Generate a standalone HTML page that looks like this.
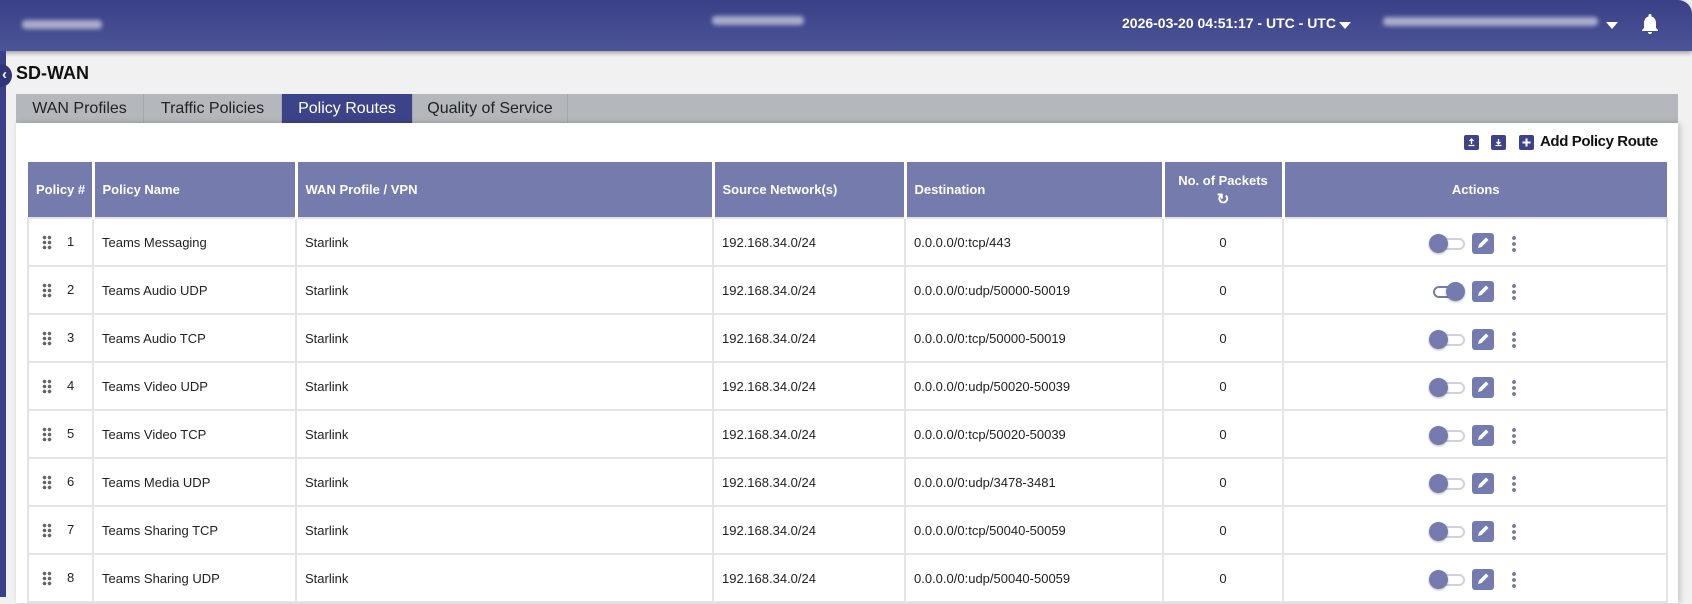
<!DOCTYPE html>
<html><head><meta charset="utf-8"><style>
*{box-sizing:border-box;margin:0;padding:0}
body{width:1692px;height:597px;overflow:hidden;background:#f1f1f1;font-family:"Liberation Sans",sans-serif;position:relative}
.hdr{position:absolute;left:0;top:0;width:1692px;height:51px;background:linear-gradient(#3a4087,#4c5497);box-shadow:0 2px 5px rgba(0,0,0,.35);color:#fff;border-top-right-radius:14px}
.blur{position:absolute;height:9px;background:rgba(255,255,255,.55);filter:blur(2px);border-radius:4px}
.lstripe{position:absolute;left:0;top:51px;width:6px;height:546px;background:#3a4087}
.circ{position:absolute;left:-11px;top:64px;width:23px;height:23px;border-radius:50%;background:#2f3578;color:#fff;font-size:15px;font-weight:bold;line-height:22px;text-align:right;padding-right:5px}
.title{position:absolute;left:16px;top:63px;font-size:18px;font-weight:bold;color:#111}
.tabs{position:absolute;left:16px;top:94px;width:1662px;height:29px;background:#b4b7bb}
.tab{position:absolute;top:0;height:29px;line-height:29px;text-align:center;font-size:16px;color:#222;border-right:1px solid #a5a8ad}
.card{position:absolute;left:16px;top:123px;width:1662px;height:480px;background:#fff;box-shadow:2px 0 6px rgba(0,0,0,.2)}
.sq{position:absolute;top:135px;width:15px;height:15px;background:#3d4388;border-radius:2px}
table{position:absolute;left:27px;top:162px;border-collapse:collapse;table-layout:fixed;width:1641px}
th{background:#757bac;color:#fff;font-size:13px;font-weight:bold;height:56px;text-align:left;padding-left:8px;border-left:3px solid #fff}
th:first-child{border-left:none}
td{height:48px;font-size:13px;color:#222;padding-left:8px;border:2px solid #e4e4e4}
td:first-child{padding-left:13px}
.c{text-align:center;padding-left:0}
.grip{display:inline-block;width:10px;height:15px;margin-right:15px;vertical-align:middle;background:radial-gradient(circle,#666 1.6px,transparent 2px) 0 0/5px 5px}
.act{position:relative;height:48px}
.tr{position:absolute;top:18px;width:30px;height:12px;border-radius:6px;border:2px solid #cfd1e3}
.kn{position:absolute;top:14px;width:19px;height:19px;border-radius:50%;background:#757bac;box-shadow:0 1px 2px rgba(0,0,0,.3)}
.ed{position:absolute;top:13px;width:22px;height:21px;background:#757bac;border-radius:3px}
.dots{position:absolute;top:15px;width:4px;height:18px;background:radial-gradient(circle,#757bac 1.8px,transparent 2.1px) 0 0/4px 6px}
</style></head><body>
<div class="hdr">
<div class="blur" style="left:22px;top:20px;width:80px"></div>
<div class="blur" style="left:712px;top:16px;width:92px"></div>
<div style="position:absolute;left:1122px;top:15px;font-size:14px;font-weight:bold">2026-03-20 04:51:17 - UTC - UTC</div>
<div style="position:absolute;left:1339px;top:22px;border:6px solid transparent;border-top:7px solid #fff"></div>
<div class="blur" style="left:1383px;top:17px;width:215px"></div>
<div style="position:absolute;left:1606px;top:22px;border:6px solid transparent;border-top:7px solid #fff"></div>
<svg style="position:absolute;left:1641px;top:13px" width="18" height="22" viewBox="0 0 18 22"><path d="M9 1a1.5 1.5 0 0 1 1.5 1.5v1C13.5 4.3 15 7 15 10v5l2 2v1H1v-1l2-2v-5c0-3 1.5-5.7 4.5-6.5v-1A1.5 1.5 0 0 1 9 1zM7 19h4a2 2 0 0 1-4 0z" fill="#fff"/></svg>
</div>
<div class="lstripe"></div>
<div class="circ">‹</div>
<div class="title">SD-WAN</div>
<div class="tabs">
<div class="tab" style="left:0;width:128px">WAN Profiles</div>
<div class="tab" style="left:128px;width:138px">Traffic Policies</div>
<div class="tab" style="left:266px;width:131px;background:#3d4388;color:#fff">Policy Routes</div>
<div class="tab" style="left:397px;width:155px">Quality of Service</div>
</div>
<div class="card"></div>
<div class="sq" style="left:1464px"><svg width="15" height="15" viewBox="0 0 15 15"><path d="M7.5 4v5M5.5 6l2-2 2 2M4.5 10.5h6" stroke="#fff" stroke-width="1.3" fill="none"/></svg></div>
<div class="sq" style="left:1491px"><svg width="15" height="15" viewBox="0 0 15 15"><path d="M7.5 4v5M5.5 7l2 2 2-2M4.5 10.5h6" stroke="#fff" stroke-width="1.3" fill="none"/></svg></div>
<div class="sq" style="left:1519px"><svg width="15" height="15" viewBox="0 0 15 15"><path d="M7.5 3.5v8M3.5 7.5h8" stroke="#fff" stroke-width="2" fill="none"/></svg></div>
<div style="position:absolute;left:1540px;top:133px;font-size:15px;font-weight:bold;color:#111;letter-spacing:-0.4px">Add Policy Route</div>
<table>
<colgroup><col style="width:65px"><col style="width:203px"><col style="width:417px"><col style="width:192px"><col style="width:258px"><col style="width:120px"><col></colgroup>
<tr><th>Policy #</th><th>Policy Name</th><th>WAN Profile / VPN</th><th>Source Network(s)</th><th>Destination</th><th class="c" style="line-height:19px">No. of Packets<br><span style="font-size:15px">↻</span></th><th class="c">Actions</th></tr>
<tr><td><span class="grip"></span>1</td><td>Teams Messaging</td><td>Starlink</td><td>192.168.34.0/24</td><td>0.0.0.0/0:tcp/443</td><td class="c">0</td><td class="act"></td></tr>
<tr><td><span class="grip"></span>2</td><td>Teams Audio UDP</td><td>Starlink</td><td>192.168.34.0/24</td><td>0.0.0.0/0:udp/50000-50019</td><td class="c">0</td><td class="act"></td></tr>
<tr><td><span class="grip"></span>3</td><td>Teams Audio TCP</td><td>Starlink</td><td>192.168.34.0/24</td><td>0.0.0.0/0:tcp/50000-50019</td><td class="c">0</td><td class="act"></td></tr>
<tr><td><span class="grip"></span>4</td><td>Teams Video UDP</td><td>Starlink</td><td>192.168.34.0/24</td><td>0.0.0.0/0:udp/50020-50039</td><td class="c">0</td><td class="act"></td></tr>
<tr><td><span class="grip"></span>5</td><td>Teams Video TCP</td><td>Starlink</td><td>192.168.34.0/24</td><td>0.0.0.0/0:tcp/50020-50039</td><td class="c">0</td><td class="act"></td></tr>
<tr><td><span class="grip"></span>6</td><td>Teams Media UDP</td><td>Starlink</td><td>192.168.34.0/24</td><td>0.0.0.0/0:udp/3478-3481</td><td class="c">0</td><td class="act"></td></tr>
<tr><td><span class="grip"></span>7</td><td>Teams Sharing TCP</td><td>Starlink</td><td>192.168.34.0/24</td><td>0.0.0.0/0:tcp/50040-50059</td><td class="c">0</td><td class="act"></td></tr>
<tr><td><span class="grip"></span>8</td><td>Teams Sharing UDP</td><td>Starlink</td><td>192.168.34.0/24</td><td>0.0.0.0/0:udp/50040-50059</td><td class="c">0</td><td class="act"></td></tr>
</table>
<div id="acts"></div>
<script>
var h='';var ys=[220,268,316,364,412,460,508,556];
ys.forEach(function(y,i){
 var on=i==1;
 h+='<div style="position:absolute;left:0;top:'+y+'px;width:1692px;height:48px">';
 if(on){h+='<div class="tr" style="left:1433px;border-color:#757bac"></div><div class="kn" style="left:1446px"></div>';}
 else{h+='<div class="tr" style="left:1435px"></div><div class="kn" style="left:1429px"></div>';}
 h+='<div class="ed" style="left:1472px"><svg width="22" height="21" viewBox="0 0 22 21"><path d="M6 15l1-3.5 7-7 2.5 2.5-7 7z" fill="#fff"/></svg></div>';
 h+='<div class="dots" style="left:1512px"></div></div>';
});
document.getElementById('acts').innerHTML=h;
</script>
</body></html>
